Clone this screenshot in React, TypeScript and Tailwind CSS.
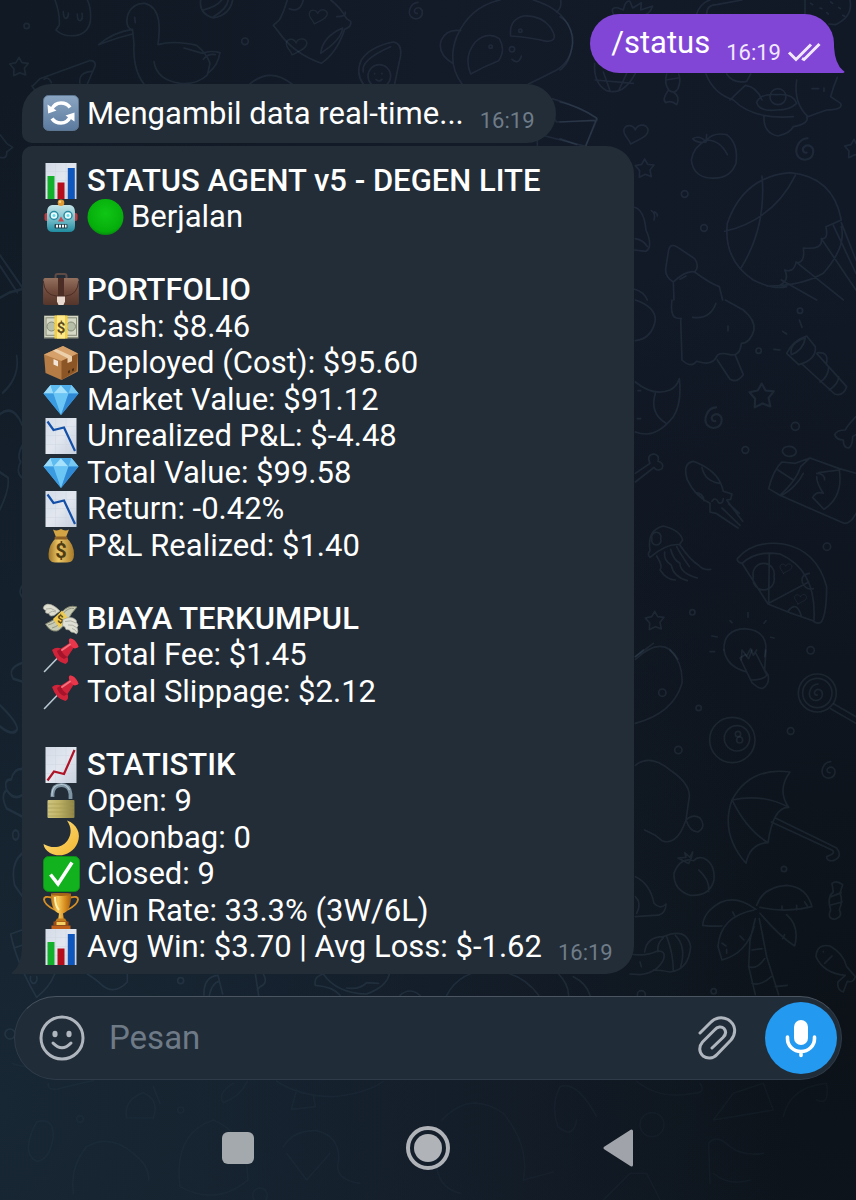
import type { ReactNode } from "react";

/* ---------- emoji ---------- */

function Emoji({ label, children }: { label: string; children: ReactNode }) {
  return (
    <svg viewBox="0 0 36 36" role="img" aria-label={label} className="size-9 shrink-0 overflow-visible">
      {children}
    </svg>
  );
}

const Refresh = () => (
  <Emoji label="Refresh">
    <rect x="0.5" y="0.5" width="35" height="35" rx="5" fill="url(#refreshFill)" stroke="#5d7691" strokeWidth="1" />
    <g fill="none" stroke="#fff" strokeWidth="3.6">
      <path d="M8.500 14.500C11 9.500 14 8 18 8c4 0 7 1.500 9 4.500" />
      <path d="M27.500 21.500C25 26.500 22 28 18 28c-4 0-7-1.500-9-4.500" />
    </g>
    <path d="M4.500 9.500 5.200 18.500 13.500 15.500z M31.500 26.500 31.500 17.500 22.500 20.500z" fill="#fff" />
  </Emoji>
);

const ChartPaper = () => (
  <>
    <rect x="2.500" y="0" width="31" height="36" fill="url(#paper)" />
    <path d="M3 8.500h30M3 17.500h30M3 26.500h30M12.500 0v36M23 0v36" stroke="#ced6e1" strokeWidth="0.500" />
  </>
);

const Bars = () => (
  <Emoji label="Bar chart">
    <ChartPaper />
    <rect x="4.500" y="13" width="7" height="23" fill="#13b02c" />
    <rect x="14.500" y="19.500" width="7" height="16.500" fill="#b50d1b" />
    <rect x="24.800" y="5" width="7" height="31" fill="#0f57bd" />
  </Emoji>
);

const Down = () => (
  <Emoji label="Falling chart">
    <ChartPaper />
    <path d="M4.500 3.500 10.500 12 21 9.500 32 33" fill="none" stroke="#1450a8" strokeWidth="2.200" />
  </Emoji>
);

const Up = () => (
  <Emoji label="Rising chart">
    <ChartPaper />
    <path d="M4.500 33.500 11 24.500 21 27 31.500 3" fill="none" stroke="#b01226" strokeWidth="2.200" />
  </Emoji>
);

const Robot = () => (
  <Emoji label="Robot">
    <rect x="1.500" y="14" width="5" height="8" rx="2" fill="#c23a3f" />
    <rect x="29.500" y="14" width="5" height="8" rx="2" fill="#c23a3f" />
    <path d="M9 6h18q5 1 5 7v14q0 6-6 6H10q-6 0-6-6V13q0-6 5-7z" fill="url(#robotFill)" />
    <circle cx="18" cy="3.800" r="3.300" fill="#e29a35" />
    <circle cx="17" cy="2.800" r="1.200" fill="#f9d487" />
    <g fill="#e9fbff" stroke="#2a8ba0" strokeWidth="1.500">
      <circle cx="11" cy="16.500" r="4" />
      <circle cx="25" cy="16.500" r="4" />
    </g>
    <circle cx="11" cy="16.500" r="1.500" fill="#66d9ea" />
    <circle cx="25" cy="16.500" r="1.500" fill="#66d9ea" />
    <path d="M18 17.500 21 22.500H15z" fill="#c84b50" />
    <rect x="11.500" y="25" width="13" height="4.500" rx="1" fill="#24424d" />
    <path d="M13 25.800h2v2.800h-2zM16 25.800h2v2.800h-2zM19 25.800h2v2.800h-2zM22 25.800h1.500v2.800H22z" fill="#f4f8f8" />
  </Emoji>
);

const Green = () => (
  <Emoji label="Green circle">
    <circle cx="18.500" cy="18" r="18" fill="url(#greenFill)" />
  </Emoji>
);

const Briefcase = () => (
  <Emoji label="Briefcase">
    <path d="M12.500 6V4q0-2 2-2h7q2 0 2 2v2" fill="none" stroke="#5f4b45" strokeWidth="2" />
    <path d="M2 6h32q1.500 0 1.700 2l.3 23q0 2-2 2H2q-2 0-2-2L.3 8Q.5 6 2 6z" fill="url(#caseFill)" />
    <path d="M.3 9q1 14 13 15h9.400q12-1 13-15" fill="none" stroke="#4a2d25" strokeWidth="1" />
    <rect x="15" y="6" width="6" height="19" fill="#4b2d26" />
    <path d="M14 24.500h8v5l-1.500 3.500h-5l-1.500-3.500z" fill="#e8d8cd" />
  </Emoji>
);

const Cash = () => (
  <Emoji label="Banknote">
    <rect x="1" y="6.500" width="34.500" height="23" fill="#8d9180" />
    <rect x="1.500" y="7" width="33.500" height="21" fill="#d5d8c5" />
    <rect x="3" y="8.800" width="30.500" height="17.500" fill="none" stroke="#878d78" strokeWidth="1" />
    <circle cx="8.500" cy="17.500" r="4.500" fill="#b8bfa8" stroke="#858c77" />
    <circle cx="28" cy="17.500" r="4.500" fill="#b8bfa8" stroke="#858c77" />
    <path d="M11.500 6.500h13v23h-13z" fill="#f3cf45" />
    <path d="M14 6.500h8v23h-8z" fill="#ffe98b" />
    <text x="18" y="23.500" textAnchor="middle" fontSize="15" fontWeight="700" fill="#5c4a1b" fontFamily="Roboto, sans-serif">$</text>
  </Emoji>
);

const Box = () => (
  <Emoji label="Package">
    <path d="M1 9.500 20 1l15 7.500v18L18.500 35 2.500 28z" fill="#b57c45" />
    <path d="M1 9.500 20 1l15 7.500L18.500 16z" fill="#d5a06a" />
    <path d="M18.500 16 35 8.500 33.500 26 18.500 35z" fill="#8b5526" />
    <path d="M10 5.700 13.500 4 29 11.300v5L24.500 18v-4.700z" fill="#ecd0ab" />
    <path d="M10.500 14 15 16v5.500l-4.500-2z" fill="#f2e5d7" />
    <path d="M25 26l2-1v2.500l-2 1zM29 24l2-1v2.500l-2 1z" fill="#4c2d13" />
  </Emoji>
);

const Gem = () => (
  <Emoji label="Gem">
    <path d="M7.500 3h21L35.500 11.500 18 33 .5 11.500z" fill="#54b4ec" />
    <path d="M7.500 3 .5 11.500h10z" fill="#9bdcfa" />
    <path d="M7.500 3 10.500 11.500 18 3.500z" fill="#5fbcf0" />
    <path d="M18 3.200 10.500 11.500h15z" fill="#a6e2fc" />
    <path d="M28.500 3 25.500 11.500 18 3.500z" fill="#4facea" />
    <path d="M28.500 3 35.500 11.500h-10z" fill="#76c8f3" />
    <path d="M.5 11.500h10L18 33z" fill="#3a9be0" />
    <path d="M10.500 11.500h15L18 33z" fill="#6cc6f5" />
    <path d="M25.500 11.500h10L18 33z" fill="#2f88d4" />
  </Emoji>
);

const MoneyBag = () => (
  <Emoji label="Money bag">
    <path d="M10 1.500q4 2 8-.5 4 2.500 8 .5l-3.500 9h-9z" fill="#d3a443" />
    <path d="M13.500 9.500h9.500Q31 16 31 26.500 31 34.500 24 34.500H12Q5 34.500 5.500 26 6 16 13.500 9.500z" fill="url(#goldFill)" />
    <rect x="11.500" y="8.500" width="13" height="3" rx="1.500" fill="#8c5f25" />
    <text x="18" y="30" textAnchor="middle" fontSize="20" fontWeight="700" fill="#4d3b14" fontFamily="Roboto, sans-serif">$</text>
  </Emoji>
);

const FlyingMoney = () => (
  <Emoji label="Money with wings">
    <path d="M17 10Q7 0 1.500 4.500-1.500 8 3 9.500 1 12.500 6 12.500 6 16 11 14.500z" fill="#ddddd0" stroke="#a5a699" strokeWidth="0.700" />
    <path d="M3 8Q8 6 13 10M6 12q3-3 7-1" fill="none" stroke="#a5a699" strokeWidth="0.800" />
    <path d="M2.500 23Q11 20 18 12 25 3 34 6 28 12 24.500 19.500 19 28 14 30 7 31 2.500 23z" fill="#c9ccb5" stroke="#7f826c" strokeWidth="1" />
    <path d="M5 24Q14 22 20 12.500 26 6 31 7.500M9 27q8-2 13-11" fill="none" stroke="#8d917b" strokeWidth="0.900" />
    <path d="M10 18 19 9.500l6 7.500-8.500 10z" fill="#efcb51" />
    <text x="17.500" y="21.500" textAnchor="middle" fontSize="11" fontWeight="700" fill="#574711" fontFamily="Roboto, sans-serif">$</text>
    <path d="M20 18.500q8-4 12.500 0 1.500 1.500 1 3 3 3 .5 5 2 4-.5 6.500-2.500-2-5.500-2-1-3-5-2.500-.5-3-3.500-4z" fill="#e0e0d4" stroke="#a5a699" strokeWidth="0.700" />
    <path d="M22 20.500q6-2 11 1.500M25 24q5-1 9 3M29 27.500q3 .5 5 4" fill="none" stroke="#a5a699" strokeWidth="0.800" />
  </Emoji>
);

const Pin = () => (
  <Emoji label="Pushpin">
    <path d="M14.500 21 1.500 34.500" stroke="#b9c8d2" strokeWidth="1.600" strokeLinecap="round" />
    <path d="M9 13q4-3.500 9-1.500L26.500 6q-1.500-3 .5-4.500 5 0 8.500 8-1.500 2.500-5 1.500l-6 9q2 5-2 7Q13 25 9 13z" fill="#d0243a" />
    <path d="M27 1.500q5 0 8.500 8-1.500 2.500-5 1.500Q26 8 26.500 6q-1.500-3 .5-4.500z" fill="#e8364a" />
    <path d="M18 11.500Q18.500 17 24.500 20L21 22q-6-3-7-8z" fill="#a5142a" />
    <path d="M19 13 27 7.500" stroke="#f2727f" strokeWidth="2" strokeLinecap="round" />
  </Emoji>
);

const Lock = () => (
  <Emoji label="Open lock">
    <path d="M9.500 14V11Q10 2 18.500 2 26.500 2 27.500 11v5" fill="none" stroke="#7f95a3" strokeWidth="3.800" />
    <path d="M9 13V11Q9.500 1.500 18.500 1.500 24 1.500 26.500 7" fill="none" stroke="#b8cad4" strokeWidth="1.200" />
    <rect x="4.500" y="17" width="27" height="18" rx="1" fill="url(#lockFill)" />
    <path d="M5 21h26M5 25h26M5 29h26M5 33h26" stroke="#a1974f" strokeWidth="0.600" />
  </Emoji>
);

const Moon = () => (
  <Emoji label="Crescent moon">
    <path d="M24 .5C34 4 38.500 14 34.500 23 30 34 17 38.500 7 33 3 30.500 1 28 .5 24 9 29 19 28 24.500 20.500 29 14 28.500 7 24 .5z" fill="url(#moonFill)" />
  </Emoji>
);

const Check = () => (
  <Emoji label="Done">
    <rect x="0.500" y="0.500" width="36" height="35" rx="5" fill="#12b21f" stroke="#0b8f17" />
    <path d="M7.500 18.500 15 28 29 6.500" fill="none" stroke="#fff" strokeWidth="3.600" />
  </Emoji>
);

const Trophy = () => (
  <Emoji label="Trophy">
    <path d="M8.500 4.500Q1 2.500 1 6.500 1.500 12 12 17M27.500 4.500Q35 2.500 35 6.500 34.500 12 24 17" fill="none" stroke="#d78f25" strokeWidth="1.900" />
    <path d="M8 .5h20q.5 17-8 20l1 7h-6l1-7Q7.500 17.500 8 .5z" fill="url(#trophyFill)" />
    <ellipse cx="18" cy="1.500" rx="10" ry="1.500" fill="#a76515" />
    <path d="M12 4q0 9 4 13" fill="none" stroke="#fff0ae" strokeWidth="2" />
    <path d="M14 25.500h8l2 3.500H12z" fill="#c17b1d" />
    <rect x="10.500" y="28.500" width="15" height="4" fill="#9e4a12" />
    <rect x="13.500" y="29" width="9" height="3" fill="#f4cf63" />
    <rect x="8.500" y="32.500" width="19" height="3.500" fill="#bf5f19" />
  </Emoji>
);

function EmojiPaints() {
  return (
    <svg aria-hidden="true" className="absolute size-0">
      <defs>
        <linearGradient id="paper" x2="1" y2="1"><stop stopColor="#d3dbe7" /><stop offset="0.5" stopColor="#e2e7ef" /><stop offset="1" stopColor="#c8d1df" /></linearGradient>
        <linearGradient id="refreshFill" x2="0" y2="1"><stop stopColor="#8ba6c2" /><stop offset="1" stopColor="#5b7a9e" /></linearGradient>
        <linearGradient id="robotFill" x2="0" y2="1"><stop stopColor="#c3e4e8" /><stop offset="0.500" stopColor="#7cc0cc" /><stop offset="1" stopColor="#1f8ca0" /></linearGradient>
        <radialGradient id="greenFill" cx="0.500" cy="0.400" r="0.600"><stop stopColor="#10c615" /><stop offset="0.850" stopColor="#05ad0b" /><stop offset="1" stopColor="#078a10" /></radialGradient>
        <linearGradient id="caseFill" x2="0" y2="1"><stop stopColor="#94705f" /><stop offset="0.500" stopColor="#6f4a3c" /><stop offset="1" stopColor="#55352a" /></linearGradient>
        <linearGradient id="goldFill" x2="1" y2="0"><stop stopColor="#9d7427" /><stop offset="0.400" stopColor="#ecc765" /><stop offset="1" stopColor="#a87a29" /></linearGradient>
        <linearGradient id="lockFill" x2="1" y2="0"><stop stopColor="#cfc480" /><stop offset="0.400" stopColor="#c0b468" /><stop offset="1" stopColor="#8c8244" /></linearGradient>
        <linearGradient id="moonFill" x2="1" y2="1"><stop stopColor="#fbe084" /><stop offset="1" stopColor="#f3b72f" /></linearGradient>
        <linearGradient id="trophyFill" x2="1" y2="0"><stop stopColor="#c27a18" /><stop offset="0.350" stopColor="#f7c95a" /><stop offset="0.700" stopColor="#d88d1f" /><stop offset="1" stopColor="#a65f10" /></linearGradient>
      </defs>
    </svg>
  );
}

/* ---------- wallpaper ---------- */

const STAR = "M0-28 9-12 28-10 16 5 20 25 2 18-16 27-15 7-28-8-9-12z";
const SPIRAL = "M0 6c-8 2-12-8-5-14 10-7 22 1 20 14-2 16-22 22-34 10C-30 2-20-26 2-27";
const HEART = "M-16 36C-20 20-40 10-36-8-30-24-8-22-2-6 4-24 30-26 36-8 38 12 14 20-16 36z";

function Wallpaper() {
  return (
    <svg
      aria-hidden="true"
      viewBox="0 0 856 1200"
      preserveAspectRatio="xMidYMin slice"
      className="pointer-events-none absolute inset-0 size-full"
      fill="none"
      stroke="#7f9ab8"
      strokeOpacity="0.120"
      strokeWidth="5"
      strokeLinecap="round"
      strokeLinejoin="round"
    >
      {/* top left: ghost, pelican, ball, fish, avocado */}
      <g transform="scale(0.3333)">
        <path d="M165 0Q180 40 178 75L168 90Q190 112 230 106 272 96 272 50 272 20 262 0M190 35q0 20 8 20 8-2 7-16M232 42q0 20 8 20 10-4 6-22" />
        <path d="M432 252Q398 210 402 130L398 92Q372 80 385 40 400 8 435 10 468 18 476 62 480 90 474 134 520 120 590 136 620 160 630 190L622 225Q590 255 540 250 470 240 462 185M398 88Q340 96 296 134 360 110 398 102M404 52l2 16M552 144 608 160Q630 150 660 158 654 196 626 218M610 178Q624 160 646 164" />
        <path d="M602 0Q596 40 640 54 690 44 698 0M610 30Q650 20 665 0M640 50Q680 28 685 0" />
        <path d="M862 0Q850 40 838 60L820 76 836 96Q880 160 964 190 1010 160 1034 88 1056 80 1052 64L1040 56Q1020 20 992 0M868 26Q900 40 910 0M962 160Q968 110 1028 84 1024 120 962 160M1010 50Q1040 50 1036 36" />
        <path transform="translate(955 45) scale(.75)" d={HEART} />
        <path transform="translate(890 134) scale(.85)" d={HEART} />
        <path d="M1090 252Q1066 220 1084 180 1110 140 1180 126 1206 130 1202 166L1184 252M1090 216Q1080 180 1172 140" />
        <circle cx="1138" cy="228" r="34" />
        <path d="M1124 220v2M1146 220v2M1128 238q8 10 18 0" />
        <path d="M750 252Q810 200 876 252M100 256 120 236 268 182Q286 180 286 196L262 252M132 238q14-10 22 10M240 250q-6-32 34-36M104 270 96 258" />
        <circle cx="80" cy="78" r="8" /><circle cx="735" cy="124" r="10" />
        <path transform="translate(57 200)" d={STAR} />
        <path transform="translate(1252 34)" d={SPIRAL} />
      </g>

      {/* panda and envelope */}
      <g transform="translate(400 0) scale(0.3333)">
        <path d="M186 252Q140 190 170 110 210 20 300 0M400 0Q500 30 518 110 520 180 470 210 420 236 385 252M158 190Q110 160 124 120 140 86 182 92M470 36Q486 24 482 0" />
        <path d="M212 222Q190 170 226 126 262 92 298 116 318 150 296 182 250 200 212 222zM332 108Q326 60 370 48 420 44 450 80 480 124 440 124 390 112 332 108zM336 178q20 18 28-10" />
        <circle cx="336" cy="148" r="8" /><circle cx="361" cy="92" r="5" /><circle cx="272" cy="140" r="5" />
        <path d="M456 296Q540 320 592 356L558 436M412 402 560 440M412 402v36M458 350 470 366 590 362" />
      </g>

      {/* top right */}
      <g transform="translate(560 0) scale(0.3333)">
        <path d="M0 50Q36 70 38 130 30 190 0 210M160 42Q150 20 175 24L190 30Q196 0 210 4L218 24 244 8 242 30 278 18Q270 40 256 44M410 42Q420 10 450 0M440 42Q440 14 470 14L546 0M735 0v42M870 0Q880 50 826 74L806 72" />
        <path d="M752 10l6 4M780 24l6 2M812 6l6 4M836 22l5 4M848 46l6 3M800 38l5 4" />
        <path d="M104 190Q100 250 140 272 190 288 226 220M106 240 220 250M130 216 150 272M200 220 176 272" />
        <path d="M320 222Q312 250 326 270 344 284 354 266 364 240 356 222M318 240 354 234M326 270Q304 300 318 308 334 300 350 314 362 290 340 276" />
        <path d="M438 222Q460 280 520 300 580 360 700 350M500 222Q520 252 560 244L572 222M510 300Q530 280 556 256 590 260 606 300M590 308Q600 280 650 284 700 280 710 310 690 330 650 330 600 336 590 308M630 290a24 24 0 1 0 48 0 24 24 0 1 0-48 0" />
        <path d="M710 240Q700 310 744 350 770 340 800 330 850 330 842 310L812 290Q820 260 832 232M612 350Q610 400 654 408 690 400 700 380 750 370 740 350M756 266h20M792 264v10" />
        <path d="M0 306Q60 320 110 354L78 436M0 366 110 360M0 416 50 434" />
        <path transform="translate(228 396)" d={HEART} />
        <path transform="translate(254 505)" d={STAR} />
        <path transform="translate(740 450) scale(1.300)" d={SPIRAL} />
        <path transform="translate(882 446)" d={STAR} />
        <path d="M440 420Q400 440 394 480 400 530 450 534 510 540 528 490 536 430 500 404 460 396 440 420zM440 420Q480 420 502 464M438 426Q420 404 398 416 410 430 438 426L440 404" />
        <circle cx="374" cy="582" r="10" /><circle cx="432" cy="684" r="10" />
        <path d="M224 622Q252 630 258 690 280 740 258 754L224 750M226 716Q250 720 262 740M274 632q14 8 8 28M284 636q10 6 8 12" />
        <path d="M844 660Q820 530 690 518 550 530 502 670 490 780 580 840 640 870 680 860M606 528Q620 680 542 806M706 526Q640 660 494 694M844 660 798 680Q806 720 784 716 790 750 730 744 736 790 708 788 700 820 674 810 690 840 660 856M844 680Q860 740 790 820 720 860 620 858M844 668 888 780M784 716 888 870M708 786 850 900M664 840 770 900M820 676 888 820" />
        <path d="M340 846Q312 830 318 800L326 750Q330 730 350 740L404 776Q420 800 404 816 380 810 340 846L342 900M404 816Q450 850 478 860L488 900M360 838l18-10M224 868Q252 876 262 900" />
      </g>

      {/* right middle */}
      <g transform="translate(630 300) scale(0.3333)">
        <path d="M16 0Q76 20 76 60 66 116 16 122M126 0Q120 50 140 54L154 56M188 52Q240 60 258 10M286 0 340 30Q376 60 372 90 360 130 334 130 330 170 300 164 270 156 262 166 250 200 200 184 184 206 156 180L152 60M262 180 300 238Q320 250 340 224L316 166M294 78v14" />
        <path d="M470 160Q490 120 530 108L556 140Q560 180 506 194zM484 164Q476 130 526 114 520 150 484 164M516 192 614 282Q640 290 650 260L560 160M570 246Q596 230 596 200M598 270Q626 250 626 230M564 158Q596 156 590 188M458 94l12 8M508 60l8 22M432 148l18 2" />
        <circle cx="510" cy="32" r="8" /><circle cx="386" cy="152" r="8" /><circle cx="496" cy="379" r="12" /><circle cx="346" cy="450" r="10" /><circle cx="591" cy="740" r="11" /><circle cx="187" cy="937" r="8" /><circle cx="542" cy="1051" r="11" />
        <path transform="translate(395 287) scale(1.300)" d={STAR} />
        <path transform="translate(74 962)" d={STAR} />
        <path transform="translate(256 356) scale(1.250)" d={SPIRAL} />
        <path d="M16 246Q70 290 120 270 140 260 148 236 156 310 130 350 90 400 50 402 30 402 16 396M76 280Q58 340 108 370M24 272h8M22 356h10M16 520 60 490Q48 464 72 462 90 466 84 484 104 490 96 506 80 516 72 502L16 546" />
        <path d="M172 540Q156 490 190 484 260 510 276 560L280 574 306 582 302 598 290 600 338 664M240 610Q196 590 172 540M216 502Q224 544 270 550M196 578Q220 580 222 602M240 610L240 636 258 640 324 684M276 624 330 676M296 612 328 640M246 604q10-16 20 4 12 6 14-12" />
        <path d="M60 752Q50 690 100 678 150 690 158 720L148 734Q110 730 60 772 50 764 60 752zM66 716a14 14 0 1 0 26 0 14 14 0 1 0-26 0M80 768Q100 800 90 810 110 840 136 840M104 756Q100 780 124 796 130 830 172 842M122 748Q130 780 150 790 150 820 202 834M140 740Q150 760 178 800M150 736Q180 780 206 796 220 812 242 808" />
        <path d="M678 350Q650 380 646 390 620 390 614 404 620 420 640 420 640 444 656 444 668 436 668 410L678 404M460 460a20 14 0 1 0 36-12 20 14 0 1 0-36 12M416 566Q430 510 456 486L496 490 540 474 628 506 678 520M416 566 450 586 642 670Q664 670 678 640M450 586Q500 540 512 500L540 474M456 586Q500 560 520 520M444 510 490 540M566 518 628 510Q640 590 582 628L548 592Q560 572 580 580 560 550 560 530M584 540q0-20-24-20" />
        <path d="M322 776Q370 720 460 732 560 750 590 860 590 940 574 966 560 974 548 962 480 940 414 912L336 790Q320 786 322 776zM336 790Q380 750 450 762 560 810 552 960M418 760 416 910 536 846M370 830a32 32 0 1 0 62 0 32 32 0 1 0-62 0M538 820Q510 824 518 850 530 872 550 866M474 934Q500 900 514 948" />
        <path transform="translate(468 802) scale(.500)" d={HEART} /><path transform="translate(512 894) scale(.500)" d={HEART} />
        <path d="M16 1070 70 1030M16 1078Q100 1000 144 1078M282 1050Q280 990 344 986 404 990 408 1040L404 1070M334 1080 336 1050 350 1068 362 1046 370 1066 380 1050M354 938v14M300 962l6 6M408 962l-6 8M246 1008l16 3M240 1055h14M422 1012l10 2" />
      </g>

      {/* right bottom */}
      <g transform="translate(630 650) scale(0.3333)">
        <path d="M16 20 40 0M120 0Q160 40 156 100 130 190 16 220M282 0Q290 50 350 66L366 98Q390 120 400 114 420 100 414 74L404 60 408 0M330 24 366 98M378 10 410 74M364 90Q400 90 412 74M330 24 346 14 356 26 366 0" />
        <circle cx="97" cy="128" r="11" /><circle cx="206" cy="174" r="8" /><circle cx="145" cy="300" r="11" /><circle cx="482" cy="243" r="10" /><circle cx="462" cy="657" r="8" /><circle cx="307" cy="270" r="68" /><circle cx="321" cy="265" r="38" /><circle cx="324" cy="252" r="8" /><circle cx="329" cy="270" r="9" />
        <circle cx="562" cy="129" r="57" /><circle cx="562" cy="129" r="44" />
        <path transform="translate(562 129)" d={SPIRAL} /><path transform="translate(600 362)" d={SPIRAL} />
        <path d="M602 176 678 220M612 162 678 200M16 346Q60 310 120 360 180 400 178 440L168 510Q140 590 96 572L76 556 44 540M168 510Q190 490 210 504 230 530 204 546 180 546 168 510" />
        <path d="M306 450Q360 350 480 366 440 420 476 472 430 470 414 578 360 580 348 640 270 550 306 450zM306 450Q400 430 476 472M306 450Q350 540 414 578M424 516 606 600Q620 610 590 620 590 634 610 632 640 620 620 594L436 504" />
        <path d="M192 632Q150 620 132 670 130 720 180 736 240 740 252 690 256 640 220 624 200 620 192 632zM206 660Q240 690 236 724M174 640 144 624 168 622 164 608 180 622 188 606 184 624 176 640" />
        <path d="M380 766Q400 710 470 706 530 710 546 770 470 790 390 772M378 778Q300 720 240 780 220 800 218 826 250 830 276 828M372 780Q270 800 264 890L276 930Q350 910 372 830M390 790Q450 860 494 888 510 830 470 794M376 806 360 870 356 950 376 1034M388 806 410 920 446 1034M366 900 396 896M358 950Q380 960 404 926M366 1000Q390 1010 424 980M436 1010 472 1006M456 768v12M500 766v14M524 756l8 12M308 786l6 12M276 880l12 8M290 910v-12M330 858l12 12M458 866l6-12" />
        <path d="M606 700Q620 690 638 704L630 730Q640 750 628 780 640 800 614 808 590 806 602 780 590 740 610 726zM604 740 634 728M600 766 636 756" />
        <path d="M16 680Q60 700 72 760 90 780 108 762 106 800 70 796L16 800M16 740Q36 760 20 790M44 906Q50 860 100 860 170 830 182 890 176 960 120 966 90 960 70 960M100 864Q80 880 84 906M110 860Q130 910 130 964M136 856Q170 890 152 950M0 912Q50 920 80 904 110 900 100 930 80 970 30 974L0 972M30 936l4 14" />
        <path d="M646 976Q580 970 558 920 560 880 600 888 640 910 650 950L676 980Q670 1000 652 994L640 1026Q620 1020 624 996zM580 904v2M584 940 606 918" />
        <circle cx="34" cy="1034" r="12" /><circle cx="251" cy="1024" r="8" />
      </g>

      {/* left edge */}
      <g transform="translate(0 160) scale(0.3333 0.5294)">
        <path d="M0 180 66 240M0 200 52 250M0 260 30 250 66 244M50 370Q60 410 8 440M0 480Q40 460 66 500M66 540Q50 560 62 570 46 590 66 600M0 590 24 600Q30 620 0 660M66 805q-12 10 0 20M66 950Q20 960 40 980L66 985M0 1030Q50 1060 52 1075 40 1090 0 1070M66 1150Q40 1150 34 1170 10 1170 20 1190 0 1200 20 1225L66 1240M20 1190Q40 1210 66 1200M66 1310Q30 1330 44 1370L66 1390" />
        <circle cx="47" cy="1275" r="9" />
      </g>
      <g transform="scale(0.3333)">
        <path d="M0 404 20 430 38 442 20 456Q22 478 0 472" />
      </g>

      {/* behind and below the composer */}
      <g transform="translate(0 920) scale(0.3333)">
        <path d="M66 30 32 42Q50 130 110 232 150 200 164 162M42 84 66 76M262 162Q290 180 300 190 340 230 382 186L382 162M612 226Q610 170 654 166L668 222M628 226Q636 190 656 184M766 162 776 226M790 162Q806 190 780 200L772 210M946 196Q940 170 970 162M946 196Q1000 200 1020 226M970 162Q1010 220 1100 222 1160 200 1168 162M1040 204Q1080 210 1100 188L1136 190M1200 226Q1230 200 1260 226M92 170a10 14 0 1 0 18 0" />
        <circle cx="542" cy="182" r="9" /><circle cx="30" cy="342" r="15" />
      </g>
      <g transform="translate(430 920) scale(0.3333)">
        <path d="M50 226Q90 150 190 150 280 160 326 226M386 162Q414 190 416 226M430 170Q470 190 480 226" />
      </g>
      <g transform="translate(0 920) scale(0.3333)" strokeOpacity="0.045">
        <path d="M36 430Q90 450 100 430M146 490Q140 510 170 508 240 490 280 482M700 490Q650 520 670 548 720 530 742 484M830 484Q900 530 1000 530 1100 520 1150 484M890 510 874 568 946 560 940 526M380 594Q370 540 430 518 480 540 460 594zM460 500 480 550M110 606Q160 590 160 650 150 720 110 724 60 700 110 606M220 820Q210 740 260 680 330 640 400 700 450 740 446 780M540 800Q520 640 640 600 740 640 744 780 650 860 540 800M850 680Q880 630 950 632 1020 650 1016 720 1000 780 1080 790M860 700 920 780 990 700" />
        <circle cx="542" cy="570" r="9" /><circle cx="240" cy="597" r="10" /><circle cx="780" cy="826" r="22" />
      </g>
      <g transform="translate(430 920) scale(0.3333)" strokeOpacity="0.045">
        <path d="M390 500Q360 560 384 620 430 660 440 600M390 500Q440 480 500 590M36 600Q120 510 220 580 300 680 280 780L370 756M20 700Q10 800 90 820M620 484Q690 540 790 520 830 520 810 490M850 600 910 520 1000 490 1030 570zM1060 590Q1080 500 1190 490 1200 560 1160 540M840 790 836 670Q860 640 900 680 940 710 1000 700M850 760Q900 800 960 780M520 840 600 760 650 760 690 840" />
        <circle cx="666" cy="614" r="36" />
      </g>
    </svg>
  );
}

/* ---------- messages ---------- */

function Time({ className }: { className: string }) {
  return <time dateTime="16:19" className={`text-[22px] leading-[26px] ${className}`}>16:19</time>;
}

type Row = { icons: (() => ReactNode)[]; text: string; heading?: boolean };

const ROWS: (Row | null)[] = [
  { icons: [Bars], text: "STATUS AGENT v5 - DEGEN LITE", heading: true },
  { icons: [Robot, Green], text: "Berjalan" },
  null,
  { icons: [Briefcase], text: "PORTFOLIO", heading: true },
  { icons: [Cash], text: "Cash: $8.46" },
  { icons: [Box], text: "Deployed (Cost): $95.60" },
  { icons: [Gem], text: "Market Value: $91.12" },
  { icons: [Down], text: "Unrealized P&L: $-4.48" },
  { icons: [Gem], text: "Total Value: $99.58" },
  { icons: [Down], text: "Return: -0.42%" },
  { icons: [MoneyBag], text: "P&L Realized: $1.40" },
  null,
  { icons: [FlyingMoney], text: "BIAYA TERKUMPUL", heading: true },
  { icons: [Pin], text: "Total Fee: $1.45" },
  { icons: [Pin], text: "Total Slippage: $2.12" },
  null,
  { icons: [Up], text: "STATISTIK", heading: true },
  { icons: [Lock], text: "Open: 9" },
  { icons: [Moon], text: "Moonbag: 0" },
  { icons: [Check], text: "Closed: 9" },
  { icons: [Trophy], text: "Win Rate: 33.3% (3W/6L)" },
  { icons: [Bars], text: "Avg Win: $3.70 | Avg Loss: $-1.62" },
];

function StatusMessage() {
  return (
    <article className="relative rounded-[28px] rounded-tl-[10px] rounded-bl-none bg-[#222d38] px-[21px] pt-[17px] pb-2">
      <svg aria-hidden="true" viewBox="0 0 11 26" className="absolute right-full bottom-0 h-[26px] w-[11px]" fill="#222d38">
        <path d="M11 0v26H2q-3-1 0-2.500Q10 17 11 0z" />
      </svg>
      <div className="grid auto-rows-[36px_37px]">
        {ROWS.map((row, i) =>
          row === null ? (
            <div key={i} />
          ) : (
            <div key={i} className="flex gap-2">
              {row.icons.map((Icon, n) => (
                <Icon key={n} />
              ))}
              {row.heading ? (
                <h2 className="leading-9 font-medium whitespace-nowrap">{row.text}</h2>
              ) : (
                <p className="leading-9 whitespace-nowrap">{row.text}</p>
              )}
              {i === ROWS.length - 1 && <Time className="ml-2 self-end text-[#6f7c88]" />}
            </div>
          ),
        )}
      </div>
    </article>
  );
}

export default function App() {
  return (
    <main className="relative flex min-h-screen flex-col overflow-hidden bg-[radial-gradient(ellipse_at_0%_92%,#182734_0%,#18273400_65%),radial-gradient(ellipse_at_100%_85%,#0c1218_0%,#0c121800_55%),linear-gradient(to_right,#101924,#131a28_50%,#111927)] font-[Roboto,sans-serif] text-[31px] text-white">
      <EmojiPaints />
      <Wallpaper />

      <section aria-label="Messages" className="relative flex flex-col items-start gap-[3px] px-[22px] pt-[14px]">
        <article className="relative mb-2 flex items-start gap-4 self-end rounded-[30px] rounded-br-none bg-[#8146d6] py-[11px] pr-[13px] pl-[21px]">
          <p className="leading-9">/status</p>
          <div className="mt-[15px] -mb-1 flex items-center gap-[6px]">
            <Time className="text-[#f3e9ff]" />
            <svg aria-label="Read" role="img" viewBox="0 0 34 22" className="h-[22px] w-[34px]" fill="none" stroke="#f3e9ff" strokeWidth="3">
              <path d="M2 10.500 9 17.500 24 2.500M15 16.500 17 17.500 32.500 2" />
            </svg>
          </div>
          <svg aria-hidden="true" viewBox="0 0 11 26" className="absolute bottom-0 left-full h-[26px] w-[11px]" fill="#8146d6">
            <path d="M0 0v26H9q3-1 0-2.500Q1 17 0 0z" />
          </svg>
        </article>

        <article className="flex items-start gap-4 rounded-[30px] rounded-bl-[10px] bg-[#222d38] px-[21px] py-[11px]">
          <div className="flex gap-2">
            <Refresh />
            <p className="leading-[37px] whitespace-nowrap">Mengambil data real-time...</p>
          </div>
          <Time className="mt-[13px] -mb-1 text-[#6f7c88]" />
        </article>

        <StatusMessage />
      </section>

      <form
        className="relative mx-[14px] mt-[22px] flex h-[84px] items-center rounded-full border border-[#2f3b48] border-t-[#4a5561] bg-[#212c39] pr-1 pl-6"
        onSubmit={(e) => e.preventDefault()}
      >
        <button type="button" aria-label="Emoji" className="shrink-0">
          <svg viewBox="0 0 46 46" className="size-[46px]" fill="none" stroke="#b0b6bd" strokeWidth="3" strokeLinecap="round">
            <circle cx="23" cy="23" r="21" />
            <path d="M14 28Q23 37.500 32 28" />
            <ellipse cx="16" cy="19" rx="2.600" ry="3.200" fill="#b0b6bd" stroke="none" />
            <ellipse cx="30" cy="19" rx="2.600" ry="3.200" fill="#b0b6bd" stroke="none" />
          </svg>
        </button>
        <input
          type="text"
          aria-label="Pesan"
          placeholder="Pesan"
          className="ml-6 min-w-0 flex-1 bg-transparent text-[33px] leading-10 outline-none placeholder:text-[#6f7a87]"
        />
        <button type="button" aria-label="Attach" className="mr-7 shrink-0">
          <svg viewBox="0 0 40 44" className="h-11 w-10" fill="none" stroke="#b0b6bd" strokeWidth="3" strokeLinecap="round" strokeLinejoin="round">
            <path d="M3 17 13.500 6.500C18 1.500 25 .5 31 3.500c8 5 8.500 14 3 20.500L20 38.500c-4 4.500-10 4.500-14 1.500-4.500-4-4-10-.5-14L17.500 14c3-3.500 7-4 9.500-1.500 2.500 3 2 6-1 9L15 32" />
          </svg>
        </button>
        <button type="button" aria-label="Record voice message" className="flex size-[72px] shrink-0 items-center justify-center rounded-full bg-[#2399ef]">
          <svg viewBox="0 0 32 40" className="h-10 w-8" fill="none" stroke="#fff" strokeWidth="3.600" strokeLinecap="round">
            <rect x="9" y="2" width="14" height="25" rx="7" fill="#fff" stroke="none" />
            <path d="M2.500 19v1.500C2.500 28 8.500 33.500 16 33.500S29.500 28 29.500 20.500V19M16 34v3.500" />
          </svg>
        </button>
      </form>

      <nav aria-label="System navigation" className="relative flex justify-center gap-[146px] pt-[46px] pb-[30px]">
        <button type="button" aria-label="Recent apps" className="flex size-11 items-center justify-center">
          <span className="size-8 rounded-[6px] bg-[#a4a9ad]" />
        </button>
        <button type="button" aria-label="Home" className="flex size-11 items-center justify-center rounded-full border-4 border-[#b0b3b8]">
          <span className="size-7 rounded-full bg-[#b0b3b8]" />
        </button>
        <button type="button" aria-label="Back" className="flex size-11 items-center justify-center">
          <svg viewBox="0 0 30 38" className="h-[38px] w-[30px]" fill="#a0a3a9" stroke="#a0a3a9" strokeWidth="3" strokeLinejoin="round">
            <path d="M2 19 28.500 2v34z" />
          </svg>
        </button>
      </nav>
    </main>
  );
}
